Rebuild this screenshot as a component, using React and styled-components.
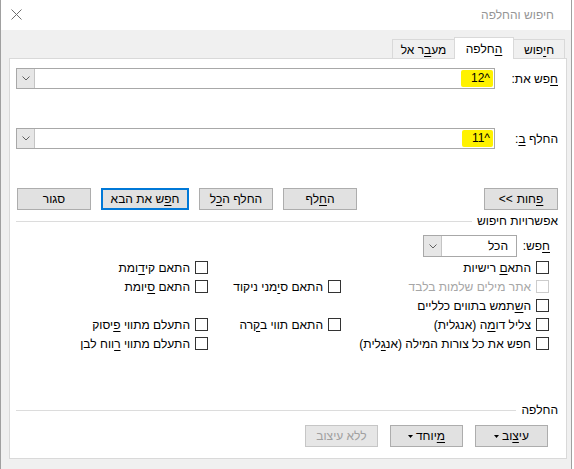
import styled, {createGlobalStyle} from "styled-components";

const GlobalStyle = createGlobalStyle`
  html, body {
    margin: 0;
    padding: 0;
    background: #fff;
  }
  body {
    font-family: "Liberation Sans", "DejaVu Sans", Arial, sans-serif;
    font-size: 12px;
    color: #000;
  }
  #root {
    width: 574px;
    height: 469px;
    overflow: hidden;
  }
  u {
    text-decoration-thickness: 1px;
    text-underline-offset: 2px;
  }
`;

const Screen = styled.div`
  display: flex;
  height: 469px;
  background: #fff;
`;

const Dialog = styled.div`
  direction: rtl;
  width: 572px;
  height: 469px;
  box-sizing: border-box;
  border-left: 1px solid #a0a0a0;
  border-right: 1px solid #a0a0a0;
  display: flex;
  flex-direction: column;
  overflow: hidden;
`;

const TitleBar = styled.div`
  height: 30px;
  flex: none;
  background: #fff;
  display: flex;
  align-items: center;
  justify-content: space-between;
  padding: 0 17px 0 10px;
`;

const Title = styled.span`
  color: #959595;
  font-size: 12px;
`;

const CloseIcon = styled.svg`
  width: 11px;
  height: 11px;
  margin-top: -2px;
`;

const Body = styled.div`
  flex: 1;
  background: #f0f0f0;
  padding: 7px 4px 0 8px;
`;

const TabRow = styled.div`
  display: flex;
  align-items: flex-end;
  height: 21px;
  padding-right: 2px;
`;

const Tab = styled.div`
  box-sizing: border-box;
  width: ${p => p.$width}px;
  height: ${p => (p.$active ? 22 : 19)}px;
  margin-bottom: ${p => (p.$active ? -1 : 0)}px;
  margin-left: -1px;
  border: 1px solid #d9d9d9;
  border-bottom: none;
  background: ${p => (p.$active ? "#fff" : "#f0f0f0")};
  position: relative;
  z-index: ${p => (p.$active ? 1 : 0)};
  display: flex;
  align-items: center;
  justify-content: center;
  padding-top: ${p => (p.$active ? 0 : 1)}px;
`;

const Panel = styled.div`
  box-sizing: border-box;
  height: 401px;
  background: #fff;
  border: 1px solid #d9d9d9;
  padding: 9px 8px 0 6px;
`;

const FieldRow = styled.div`
  display: flex;
  align-items: center;
  height: 21px;
  margin-top: ${p => p.$top || 0}px;
`;

const FieldLabel = styled.div`
  width: 63px;
  flex: none;
  text-align: right;
  margin-top: 1px;
`;

const Combo = styled.div`
  flex: 1;
  height: 21px;
  box-sizing: border-box;
  border: 1px solid #a8a8a8;
  background: #fff;
  display: flex;
`;

const ComboText = styled.div`
  flex: 1;
  display: flex;
  align-items: center;
  padding-right: 1px;
`;

const Highlight = styled.span`
  background: #fff200;
  height: 17px;
  line-height: 17px;
  padding: 0 3px 0 10px;
  border-radius: 2px;
`;

const DropButton = styled.div`
  width: 17px;
  flex: none;
  background: #e6e6e6;
  border-right: 1px solid #c4c4c4;
  display: flex;
  align-items: center;
  justify-content: center;
`;

const ButtonRow = styled.div`
  display: flex;
  justify-content: space-between;
  margin-top: 39px;
  height: 22px;
`;

const ButtonGroup = styled.div`
  display: flex;
  gap: ${p => p.$gap}px;
  margin-left: ${p => p.$left || 0}px;
  padding-right: ${p => p.$right || 0}px;
  margin-top: ${p => p.$top || 0}px;
`;

const Button = styled.button`
  width: ${p => p.$width}px;
  height: 22px;
  box-sizing: border-box;
  padding: 0;
  margin: 0;
  font: inherit;
  direction: rtl;
  text-align: center;
  white-space: nowrap;
  color: ${p => (p.disabled ? "#a0a0a0" : "#000")};
  background: ${p => (p.disabled ? "#e6e6e6" : "#e1e1e1")};
  border: ${p => (p.$default ? "2px solid #0078d7" : p.disabled ? "1px solid #c6c6c6" : "1px solid #adadad")};
`;

const MoreButton = styled(Button)`
  direction: ltr;
  display: flex;
  align-items: center;
  justify-content: center;
  gap: 4px;
`;

const Arrows = styled.span`
  direction: ltr;
`;

const Word = styled.span`
  direction: rtl;
`;

const CaretIcon = styled.svg`
  width: 5px;
  height: 3px;
  margin-right: 3px;
  vertical-align: middle;
`;

const GroupHeader = styled.div`
  display: flex;
  align-items: center;
  gap: 5px;
  height: 16px;
  margin-top: ${p => p.$top}px;
`;

const HeaderLine = styled.div`
  flex: 1;
  height: 1px;
  background: #dcdcdc;
  margin-top: 1px;
`;

const SearchRow = styled.div`
  display: flex;
  align-items: center;
  height: 22px;
  margin-top: 6px;
  padding-right: 8px;
`;

const SearchLabel = styled.div`
  width: 33px;
  text-align: right;
  flex: none;
`;

const Select = styled.div`
  width: 94px;
  height: 22px;
  box-sizing: border-box;
  border: 1px solid #a8a8a8;
  display: flex;
`;

const SelectText = styled.div`
  flex: 1;
  display: flex;
  align-items: center;
  padding-right: 8px;
`;

const OptionsGrid = styled.div`
  display: grid;
  grid-template-columns: 208px 133px 1fr;
  grid-auto-rows: 19px;
  margin-top: 1px;
  padding-right: 9px;
`;

const Option = styled.div`
  display: flex;
  align-items: center;
  gap: 5px;
  color: ${p => (p.$disabled ? "#a6a6a6" : "#000")};
  white-space: nowrap;
`;

const Check = styled.span`
  width: 13px;
  height: 13px;
  flex: none;
  box-sizing: border-box;
  background: #fff;
  border: 1px solid ${p => (p.$disabled ? "#cccccc" : "#333")};
`;

const Chevron = () => (
    <svg width="8" height="5" viewBox="0 0 8 5">
        <polyline points="0.5,0.5 4,4 7.5,0.5" fill="none" stroke="#606060" strokeWidth="1"/>
    </svg>
);

const Caret = () => (
    <CaretIcon viewBox="0 0 5 3">
        <polygon points="0,0 5,0 2.5,3" fill="#000"/>
    </CaretIcon>
);

const options = [
    [{label: <>התא<u>ם</u> רישיות</>}, null, {label: <>התאם קי<u>ד</u>ומת</>}],
    [{label: "אתר מילים שלמות בלבד", disabled: true}, {label: <>התאם ס<u>י</u>מני ניקוד</>}, {label: <>התאם <u>ס</u>יומת</>}],
    [{label: <>ה<u>ש</u>תמש בתווים כלליים</>}, null, null],
    [{label: <>צליל דו<u>מ</u>ה (אנגלית)</>}, {label: <>התאם תווי ב<u>ק</u>רה</>}, {label: <>התעלם מתווי <u>פ</u>יסוק</>}],
    [{label: <>חפש את כל צורות המילה (אנ<u>ג</u>לית)</>}, null, {label: <>התעלם מתווי <u>ר</u>ווח לבן</>}],
];

const App = () => {
    return (
        <>
            <GlobalStyle/>
            <Screen>
                <Dialog>
                    <TitleBar>
                        <Title>חיפוש והחלפה</Title>
                        <CloseIcon viewBox="0 0 11 11">
                            <line x1="0.5" y1="0.5" x2="10.5" y2="10.5" stroke="#6e6e6e" strokeWidth="1"/>
                            <line x1="10.5" y1="0.5" x2="0.5" y2="10.5" stroke="#6e6e6e" strokeWidth="1"/>
                        </CloseIcon>
                    </TitleBar>
                    <Body>
                        <TabRow>
                            <Tab $width={52}>ח<u>י</u>פוש</Tab>
                            <Tab $width={60} $active><u>ה</u>חלפה</Tab>
                            <Tab $width={63}>מע<u>ב</u>ר אל</Tab>
                        </TabRow>
                        <Panel>
                            <FieldRow>
                                <FieldLabel><u>ח</u>פש את:</FieldLabel>
                                <Combo>
                                    <ComboText><Highlight>^12</Highlight></ComboText>
                                    <DropButton><Chevron/></DropButton>
                                </Combo>
                            </FieldRow>
                            <FieldRow $top={39}>
                                <FieldLabel>החלף <u>ב</u>:</FieldLabel>
                                <Combo>
                                    <ComboText><Highlight>^11</Highlight></ComboText>
                                    <DropButton><Chevron/></DropButton>
                                </Combo>
                            </FieldRow>
                            <ButtonRow>
                                <MoreButton $width={74}>
                                    <Arrows>&lt;&lt;</Arrows>
                                    <Word><u>פ</u>חות</Word>
                                </MoreButton>
                                <ButtonGroup $gap={10} $left={1}>
                                    <Button $width={74}>ה<u>ח</u>לף</Button>
                                    <Button $width={74}>החלף ה<u>כ</u>ל</Button>
                                    <Button $width={88} $default>ח<u>פ</u>ש את הבא</Button>
                                    <Button $width={74}>סגור</Button>
                                </ButtonGroup>
                            </ButtonRow>
                            <GroupHeader $top={3}>
                                <span>אפשרויות חיפוש</span>
                                <HeaderLine/>
                            </GroupHeader>
                            <SearchRow>
                                <SearchLabel><u>ח</u>פש:</SearchLabel>
                                <Select>
                                    <SelectText>הכל</SelectText>
                                    <DropButton><Chevron/></DropButton>
                                </Select>
                            </SearchRow>
                            <OptionsGrid>
                                {options.flat().map((opt, i) =>
                                    opt ? (
                                        <Option key={i} $disabled={opt.disabled}>
                                            <Check $disabled={opt.disabled}/>
                                            <span>{opt.label}</span>
                                        </Option>
                                    ) : <div key={i}/>
                                )}
                            </OptionsGrid>
                            <GroupHeader $top={49}>
                                <span>החלפה</span>
                                <HeaderLine/>
                            </GroupHeader>
                            <ButtonGroup $gap={12} $right={10} $top={7}>
                                <Button $width={73}>עי<u>צ</u>וב<Caret/></Button>
                                <Button $width={73}><u>מ</u>יוחד<Caret/></Button>
                                <Button $width={73} disabled>ללא עיצוב</Button>
                            </ButtonGroup>
                        </Panel>
                    </Body>
                </Dialog>
            </Screen>
        </>
    );
};

export default App;
